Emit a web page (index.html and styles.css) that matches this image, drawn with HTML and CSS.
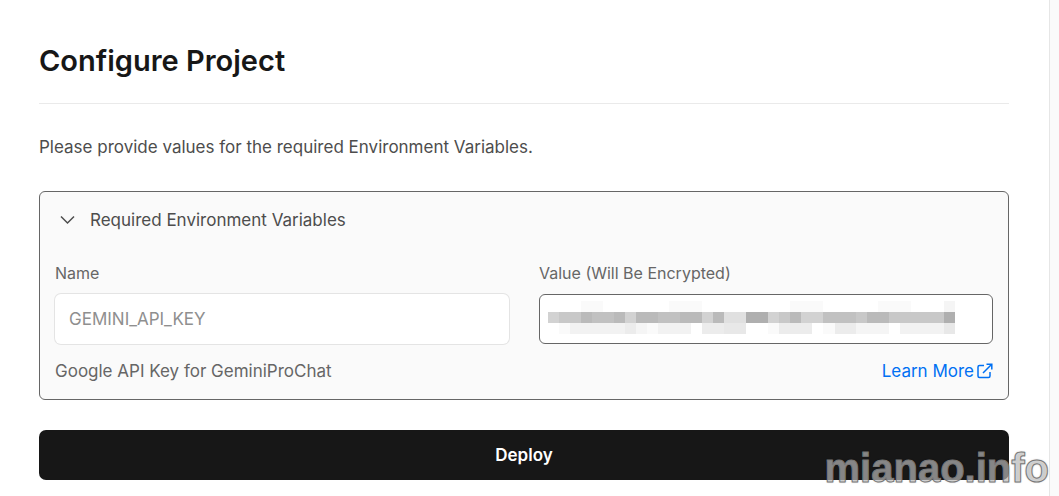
FILE: index.html
```html
<!DOCTYPE html>
<html lang="en">
<head>
<meta charset="utf-8">
<meta name="viewport" content="width=device-width, initial-scale=1">
<title>Configure Project</title>
<link rel="stylesheet" href="styles.css">
</head>
<body>
<main class="card">
  <h1 class="title">Configure Project</h1>
  <p class="intro">Please provide values for the required Environment Variables.</p>
  <form class="form">
    <section class="panel">
      <button class="toggle" type="button" aria-expanded="true">
        <svg class="chevron" viewBox="0 0 16 10" aria-hidden="true"><path d="M1 1.500 7.500 8 14 1.500"/></svg>
        <span>Required Environment Variables</span>
      </button>
      <div class="fields">
        <div class="field">
          <label class="label" for="name">Name</label>
          <input class="input" id="name" type="text" value="GEMINI_API_KEY" disabled>
        </div>
        <div class="field">
          <label class="label" for="value">Value (Will Be Encrypted)</label>
          <div class="secret">
            <input class="input input-active" id="value" type="text">
            <svg class="mosaic" viewBox="0 0 407 33" shape-rendering="crispEdges" aria-hidden="true">
              <path fill="#fafafa" d="M33 0h22v11H33zM121 0h33v11h-33zM242 0h33v11h-33zM330 0h33v11h-33zM11 22h11v11H11zM99 22h11v11H99zM220 22h11v11h-11zM275 22h12v11h-12z"/>
              <path fill="#f5f5f5" d="M396 0h11v11h-11zM88 22h11v11H88zM308 22h33v11h-33z"/>
              <path fill="#f2f2f2" d="M22 22h55v11H22zM110 22h33v11h-33zM352 22h44v11h-44z"/>
              <path fill="#ececec" d="M77 22h11v11H77zM154 22h22v11h-22zM231 22h33v11h-33zM287 22h21v11h-21z"/>
              <path fill="#e8e8e8" d="M176 22h22v11h-22zM396 22h11v11h-11z"/>
              <path fill="#c8c8c8" d="M0 11h407v11H0z"/>
              <path fill="#e0e0e0" d="M176 11h22v11h-22z"/>
              <path fill="#d2d2d2" d="M0 11h11v11H0zM77 11h11v11H77zM154 11h11v11h-11zM220 11h11v11h-11zM253 11h22v11h-22z"/>
              <path fill="#c1c1c1" d="M44 11h22v11H44zM110 11h22v11h-22zM275 11h33v11h-33z"/>
              <path fill="#bababa" d="M33 11h11v11H33zM66 11h11v11H66zM88 11h22v11H88zM132 11h22v11h-22zM165 11h11v11h-11zM242 11h11v11h-11zM319 11h22v11h-22z"/>
              <path fill="#afafaf" d="M198 11h22v11h-22zM396 11h11v11h-11z"/>
            </svg>
          </div>
        </div>
      </div>
      <div class="hint">
        <span>Google API Key for GeminiProChat</span>
        <a class="link" href="#">Learn More
          <svg class="external" viewBox="0 0 16 16" aria-hidden="true"><path d="M7 2.500H2.500a1.500 1.500 0 0 0-1.500 1.500v9a1.500 1.500 0 0 0 1.500 1.500h9a1.500 1.500 0 0 0 1.500-1.500V9M9.500 1.200H14.800V6.500M14.500 1.500 6 10"/></svg>
        </a>
      </div>
    </section>
    <button class="deploy" type="submit">Deploy</button>
  </form>
  <div class="watermark">mianao.info</div>
</main>
</body>
</html>
```
FILE: styles.css
```css
* { box-sizing: border-box; }
body {
  margin: 0;
  background: #fafafa;
  color: #4d4d4d;
  font: 17px/24px Inter, "Liberation Sans", sans-serif;
}
.card {
  position: relative;
  min-height: 100vh;
  margin-right: 9px;
  padding: 41px 40px 16px 39px;
  background: #fff;
  border-right: 1px solid #e6e6e6;
}
.title {
  margin: 0 0 31px;
  padding-bottom: 22px;
  border-bottom: 1px solid #eaeaea;
  color: #171717;
  font-size: 29px;
  line-height: 40px;
  font-weight: 600;
}
.intro { margin: 0 0 32px; }
.form { display: grid; gap: 30px; }
.panel {
  padding: 16px 15px;
  background: #fafafa;
  border: 1px solid #666;
  border-radius: 6px;
}
.toggle {
  display: flex;
  align-items: center;
  gap: 14px;
  width: 100%;
  padding: 0 0 0 5px;
  border: 0;
  background: none;
  color: inherit;
  font: inherit;
}
.chevron { width: 16px; height: 10px; fill: none; stroke: #4d4d4d; stroke-width: 1.5; }
.fields { display: grid; grid-template-columns: 1fr 1fr; gap: 30px; margin-top: 29px; }
.label { display: block; margin-bottom: 9px; color: #666; font-size: 16px; }
.input {
  display: block;
  width: 100%;
  height: 50px;
  padding: 0 14px;
  border: 0;
  border-radius: 6px;
  box-shadow: 0 0 0 1px #e4e4e4;
  background: #fff;
  color: #8f8f8f;
  font: inherit;
}
.input-active { border: 1px solid #666; box-shadow: none; }
.secret { position: relative; }
.mosaic { position: absolute; left: 9px; top: 7px; width: 407px; height: 33px; pointer-events: none; }
.hint { display: flex; justify-content: space-between; margin-top: 15px; color: #666; }
.link { display: flex; align-items: center; gap: 3px; color: #0070f3; text-decoration: none; }
.external { width: 16px; height: 16px; fill: none; stroke: currentColor; stroke-width: 1.5; }
.deploy {
  height: 50px;
  border: 0;
  border-radius: 7px;
  background: #171717;
  color: #fff;
  font: inherit;
  font-weight: 600;
}
.watermark {
  position: absolute;
  right: 0;
  bottom: 8px;
  color: rgba(255, 255, 255, 0.5);
  font: bold 40px/40px "Liberation Sans", Arial, sans-serif;
  -webkit-text-stroke: 1px #777;
  text-shadow: 0 0 2px rgba(0, 0, 0, 0.4);
  pointer-events: none;
}
```
